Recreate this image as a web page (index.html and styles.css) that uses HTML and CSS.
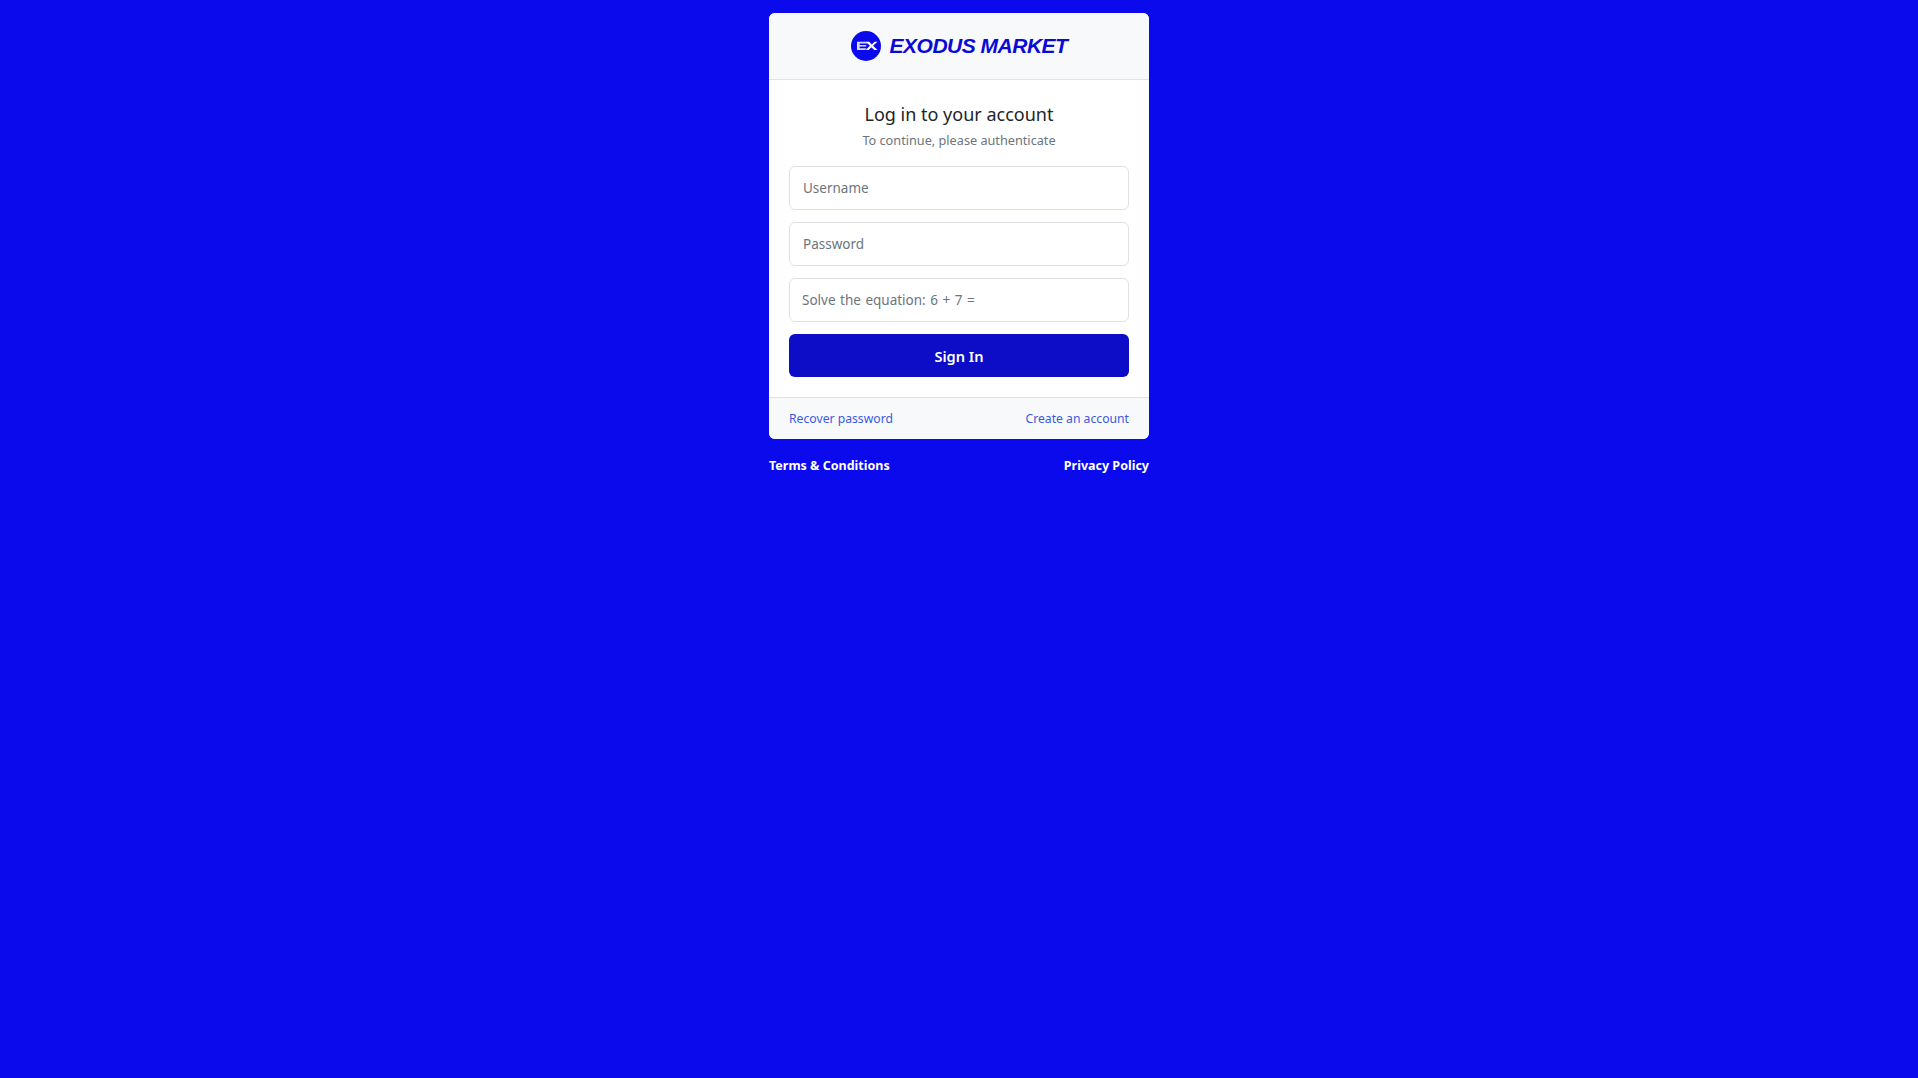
FILE: index.html

```html
<!DOCTYPE html>
<html lang="en">
<head>
    <meta charset="UTF-8">
    <meta name="viewport" content="width=device-width, initial-scale=1.0">
    <title>Exodus Market - Sign In</title>
    <link rel="stylesheet" href="styles.css">
</head>
<body>
    <main class="wrapper">
        <div class="card">
            <div class="card-header">
                <svg class="logo-icon" viewBox="0 0 30 30" aria-hidden="true">
                    <circle cx="15" cy="15" r="15" fill="#0a0aed"/>
                    <path d="M6 10.8h9.5l1.6 1.7H8.6v1.5h6.6v1.6H8.6v1.6h7l-1.4 1.7H6z" fill="#dcdcfa"/>
                    <path d="M15 10.8h3.2l2.6 2.6 2.8-2.6H26.5l-4.4 3.9 4.4 4.3h-3.2l-2.9-2.8-2.7 2.8h-3l4.2-4.3z" fill="#ffffff"/>
                </svg>
                <span class="brand">EXODUS MARKET</span>
            </div>
            <form class="card-body">
                <h1 class="title">Log in to your account</h1>
                <p class="subtitle">To continue, please authenticate</p>
                <input class="field" type="text" placeholder="Username">
                <input class="field" type="password" placeholder="Password">
                <input class="field captcha" type="text" placeholder="Solve the equation: 6 + 7 =">
                <button class="btn" type="button">Sign In</button>
            </form>
            <div class="card-footer">
                <a href="#">Recover password</a>
                <a href="#">Create an account</a>
            </div>
        </div>
        <div class="legal">
            <a href="#">Terms &amp; Conditions</a>
            <a href="#">Privacy Policy</a>
        </div>
    </main>
</body>
</html>
```

FILE: styles.css

```css
* {
    box-sizing: border-box;
}

body {
    margin: 0;
    min-height: 100vh;
    background-color: #0a0aed;
    font-family: "Noto Sans", "Open Sans", sans-serif;
    color: #212529;
}

a {
    text-decoration: none;
}

.wrapper {
    width: 380px;
    margin: 0 auto;
    padding-top: 13px;
}

.card {
    background-color: #fff;
    border-radius: 6px;
    overflow: hidden;
}

.card-header {
    height: 67px;
    display: flex;
    align-items: center;
    justify-content: center;
    gap: 9px;
    background-color: #f8f9fa;
    border-bottom: 1px solid #e2e3e8;
}

.logo-icon {
    width: 30px;
    height: 30px;
}

.brand {
    font-family: "Liberation Sans", sans-serif;
    font-size: 21px;
    font-weight: bold;
    font-style: italic;
    letter-spacing: -0.5px;
    color: #0a0ad8;
}

.card-body {
    display: flex;
    flex-direction: column;
    padding: 21px 20px 20px;
}

.title {
    margin: 0;
    font-size: 18px;
    font-weight: 400;
    line-height: 26px;
    text-align: center;
}

.subtitle {
    margin: 3px 0 16px;
    font-size: 12.7px;
    line-height: 20px;
    text-align: center;
    color: #6c757d;
}

.field {
    height: 44px;
    margin-bottom: 12px;
    padding: 0 13px;
    font-family: inherit;
    font-size: 13.5px;
    word-spacing: 1px;
    background-color: #fff;
    border: 1px solid #e0e1e6;
    border-radius: 6px;
}

.field::placeholder {
    color: #6c757d;
    opacity: 1;
}

.captcha {
    padding-left: 12px;
}

.btn {
    height: 43px;
    font-family: inherit;
    font-size: 14.6px;
    font-weight: 600;
    color: #fff;
    background-color: #0d0dc7;
    border: none;
    border-radius: 6px;
}

.card-footer {
    height: 42px;
    display: flex;
    align-items: center;
    justify-content: space-between;
    padding: 0 20px;
    font-size: 12.2px;
    background-color: #f8f9fa;
    border-top: 1px solid #e2e3e8;
}

.card-footer a {
    color: #3a5ae0;
}

.legal {
    display: flex;
    justify-content: space-between;
    margin-top: 18px;
    font-size: 12.5px;
    font-weight: 700;
}

.legal a {
    color: #fff;
}
```
